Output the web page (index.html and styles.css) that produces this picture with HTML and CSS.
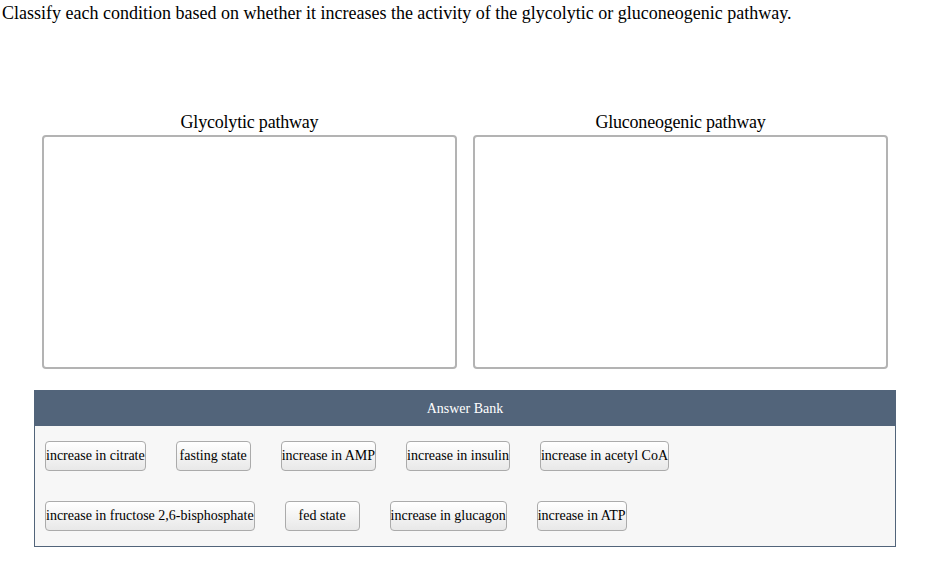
FILE: index.html
```html
<!DOCTYPE html>
<html lang="en">
<head>
<meta charset="utf-8">
<title>Glycolysis vs gluconeogenesis</title>
<link rel="stylesheet" href="styles.css">
</head>
<body>
<main class="page">
  <p class="prompt">Classify each condition based on whether it increases the activity of the glycolytic or gluconeogenic pathway.</p>

  <section class="zones">
    <div class="zone">
      <h2 class="zone-title">Glycolytic pathway</h2>
      <div class="drop"></div>
    </div>
    <div class="zone">
      <h2 class="zone-title">Gluconeogenic pathway</h2>
      <div class="drop"></div>
    </div>
  </section>

  <section class="bank">
    <div class="bank-head">Answer Bank</div>
    <div class="bank-body">
      <div class="bank-row">
        <button class="chip">increase in citrate</button>
        <button class="chip">fasting state</button>
        <button class="chip">increase in AMP</button>
        <button class="chip">increase in insulin</button>
        <button class="chip">increase in acetyl CoA</button>
      </div>
      <div class="bank-row">
        <button class="chip">increase in fructose 2,6-bisphosphate</button>
        <button class="chip">fed state</button>
        <button class="chip">increase in glucagon</button>
        <button class="chip">increase in ATP</button>
      </div>
    </div>
  </section>
</main>
</body>
</html>
```

FILE: styles.css
```css
html, body {
  margin: 0;
  padding: 0;
  background: #ffffff;
}

body {
  font-family: "Liberation Serif", "Times New Roman", serif;
  color: #000;
}

.page {
  padding: 2px 0 0 2px;
}

.prompt {
  margin: 0;
  font-size: 18px;
  line-height: 22px;
}

.zones {
  display: flex;
  gap: 16px;
  margin: 88px 0 0 40px;
}

.zone {
  width: 415px;
  display: flex;
  flex-direction: column;
  align-items: center;
}

.zone-title {
  margin: 0 0 2px;
  font-size: 18px;
  font-weight: normal;
  line-height: 21px;
  letter-spacing: -0.2px;
}

.drop {
  box-sizing: border-box;
  width: 415px;
  height: 234px;
  border: 2px solid #b3b3b3;
  border-radius: 4px;
  background: #fff;
}

.bank {
  box-sizing: border-box;
  width: 862px;
  margin: 21px 0 0 32px;
  border: 1px solid #52647a;
}

.bank-head {
  background: #52647a;
  color: #fff;
  height: 35px;
  line-height: 35px;
  text-align: center;
  font-size: 14px;
}

.bank-body {
  background: #f7f7f7;
  padding: 15px 10px 15px;
  display: flex;
  flex-direction: column;
  gap: 30px;
}

.bank-row {
  display: flex;
  gap: 30px;
}

.chip {
  box-sizing: border-box;
  height: 30px;
  min-width: 75px;
  padding: 0;
  font-family: "Liberation Serif", "Times New Roman", serif;
  font-size: 14px;
  color: #000;
  background: linear-gradient(#ffffff, #e8e8e8);
  border: 1px solid #ababab;
  border-radius: 4px;
  cursor: pointer;
}
```
